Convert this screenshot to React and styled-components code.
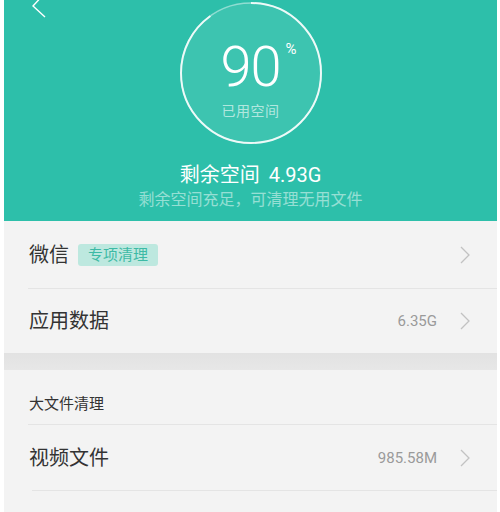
import React from 'react'
import styled, { createGlobalStyle } from 'styled-components'

const GlobalStyle = createGlobalStyle`
  html, body {
    margin: 0;
    padding: 0;
    background: #ffffff;
  }
  body {
    font-family: Roboto, "Noto Sans CJK SC", sans-serif;
  }
`

const Page = styled.div`
  width: 500px;
  height: 512px;
  box-sizing: border-box;
  padding: 0 3px 0 4px;
  overflow: hidden;
  background: #ffffff;
`

const Screen = styled.div`
  height: 100%;
  background: #f3f3f3;
`

const Header = styled.div`
  position: relative;
  height: 221px;
  background: #2dbfaa;
  display: flex;
  flex-direction: column;
  align-items: center;
  padding-top: 2px;
  box-sizing: border-box;
`

const BackButton = styled.div`
  position: absolute;
  left: 24px;
  top: -8px;
  width: 22px;
  height: 26px;
`

const Gauge = styled.div`
  position: relative;
  width: 142px;
  height: 142px;
  display: flex;
  flex-direction: column;
  align-items: center;
`

const Ring = styled.svg`
  position: absolute;
  inset: 0;
`

const Percent = styled.div`
  position: relative;
  margin-top: 38px;
  font-family: Roboto, sans-serif;
  font-weight: 300;
  font-size: 56px;
  line-height: 54px;
  color: #ffffff;
  letter-spacing: -1px;
`

const Sup = styled.span`
  position: absolute;
  top: 2px;
  right: -16px;
  font-size: 15px;
  line-height: 15px;
  font-weight: 400;
  letter-spacing: 0;
`

const GaugeLabel = styled.div`
  position: relative;
  margin-top: 9px;
  font-size: 14px;
  line-height: 16px;
  color: rgba(255, 255, 255, 0.62);
  letter-spacing: 0.5px;
`

const Title = styled.div`
  margin-top: 19px;
  font-size: 20px;
  line-height: 24px;
  color: #ffffff;
  word-spacing: 4px;
`

const Subtitle = styled.div`
  margin-top: 3px;
  font-size: 16px;
  line-height: 20px;
  color: rgba(255, 255, 255, 0.5);
`

const Group = styled.div`
  background: #f3f3f3;
`

const Row = styled.div`
  position: relative;
  height: ${({ h }) => h || 64}px;
  display: flex;
  align-items: center;
  padding: 0 27px 0 25px;
  box-sizing: border-box;
  border-bottom: ${({ divider }) => (divider ? '1px solid #e4e4e4' : 'none')};
  margin-left: ${({ divider }) => (divider ? '0' : '0')};
`

const Label = styled.div`
  font-size: 20px;
  line-height: 24px;
  color: #333333;
`

const Tag = styled.span`
  margin-left: 9px;
  padding: 0 10px;
  height: 22px;
  line-height: 22px;
  border-radius: 3px;
  background: #bde8df;
  color: #3dbaa5;
  font-size: 15px;
`

const Spacer = styled.div`
  flex: 1;
`

const Value = styled.div`
  font-family: Roboto, sans-serif;
  font-size: 15px;
  color: #9a9a9a;
  margin-right: 23px;
`

const Divider = styled.div`
  height: 1px;
  margin-left: ${({ inset }) => inset || 24}px;
  background: #e4e4e4;
`

const Band = styled.div`
  height: 17px;
  background: linear-gradient(#e2e2e2, #e7e7e7);
`

const SectionTitle = styled.div`
  height: 54px;
  box-sizing: border-box;
  padding: 26px 0 0 25px;
  font-size: 15px;
  line-height: 16px;
  color: #333333;
`

const Chevron = ({ color = '#c2c2c2' }) => (
  <svg width="10" height="18" viewBox="0 0 10 18">
    <path d="M1 1 L9 9 L1 17" fill="none" stroke={color} strokeWidth="1.3" />
  </svg>
)

const GaugeRing = () => {
  const r = 70
  const c = 2 * Math.PI * r
  return (
    <Ring width="142" height="142" viewBox="0 0 142 142">
      <circle cx="71" cy="71" r={r} fill="rgba(255,255,255,0.08)" stroke="rgba(255,255,255,0.45)" strokeWidth="1.5" />
      <circle
        cx="71"
        cy="71"
        r={r}
        fill="none"
        stroke="rgba(255,255,255,0.85)"
        strokeWidth="2"
        strokeDasharray={`${c * 0.9} ${c}`}
        transform="rotate(-90 71 71)"
      />
    </Ring>
  )
}

const items = [
  { label: '微信', tag: '专项清理', h: 68, divider: true },
  { label: '应用数据', value: '6.35G', h: 64 },
]

export default function App() {
  return (
    <Page>
      <GlobalStyle />
      <Screen>
        <Header>
          <BackButton>
            <svg width="22" height="26" viewBox="0 0 22 26">
              <path d="M17 1 L5 14 L17 25" fill="none" stroke="#ffffff" strokeWidth="1.4" />
            </svg>
          </BackButton>
          <Gauge>
            <GaugeRing />
            <Percent>
              90<Sup>%</Sup>
            </Percent>
            <GaugeLabel>已用空间</GaugeLabel>
          </Gauge>
          <Title>剩余空间 4.93G</Title>
          <Subtitle>剩余空间充足，可清理无用文件</Subtitle>
        </Header>

        <Group>
          {items.map((it, i) => (
            <React.Fragment key={it.label}>
              <Row h={it.h - (it.divider ? 1 : 0)}>
                <Label>{it.label}</Label>
                {it.tag && <Tag>{it.tag}</Tag>}
                <Spacer />
                {it.value && <Value>{it.value}</Value>}
                <Chevron />
              </Row>
              {it.divider && <Divider />}
            </React.Fragment>
          ))}
        </Group>

        <Band />

        <Group>
          <SectionTitle>大文件清理</SectionTitle>
          <Divider />
          <Row h={65}>
            <Label>视频文件</Label>
            <Spacer />
            <Value>985.58M</Value>
            <Chevron />
          </Row>
          <Divider inset={28} />
          <Row h={64} />
        </Group>
      </Screen>
    </Page>
  )
}
